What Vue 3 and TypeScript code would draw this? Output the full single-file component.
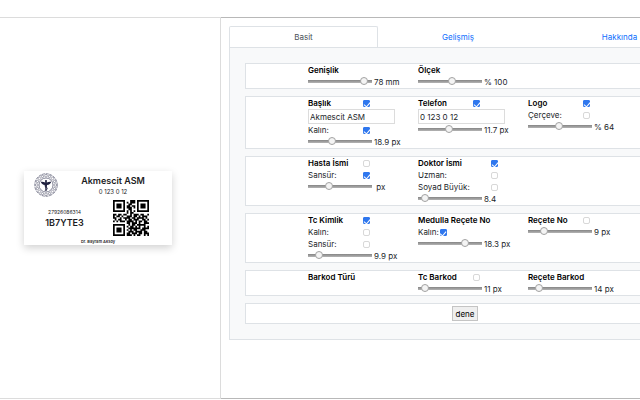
<script setup lang="ts">
import { reactive, ref } from 'vue'

interface Check {
  label: string
  checked: boolean
}

interface Field {
  id: string
  title: string
  enabled?: boolean
  text?: string
  options?: Check[]
  fit?: 'wide' | 'inline'
  slider?: number
  value?: string
}

const groups = reactive<Field[][]>([
  [
    { id: 'genislik', title: 'Genişlik', slider: 92, value: '78 mm' },
    { id: 'olcek', title: 'Ölçek', slider: 54, value: '% 100' },
  ],
  [
    { id: 'baslik', title: 'Başlık', enabled: true, text: 'Akmescit ASM', options: [{ label: 'Kalın:', checked: true }], slider: 36, value: '18.9 px' },
    { id: 'telefon', title: 'Telefon', enabled: true, text: '0 123 0 12', slider: 48, value: '11.7 px' },
    { id: 'logo', title: 'Logo', enabled: true, options: [{ label: 'Çerçeve:', checked: false }], slider: 49, value: '% 64' },
  ],
  [
    { id: 'hasta', title: 'Hasta İsmi', enabled: false, options: [{ label: 'Sansür:', checked: true }], slider: 31, value: '\u00a0px' },
    { id: 'doktor', title: 'Doktor İsmi', enabled: true, fit: 'wide', options: [{ label: 'Uzman:', checked: false }, { label: 'Soyad Büyük:', checked: false }], slider: 6, value: '8.4' },
  ],
  [
    { id: 'kimlik', title: 'Tc Kimlik', enabled: true, options: [{ label: 'Kalın:', checked: false }, { label: 'Sansür:', checked: false }], slider: 12, value: '9.9 px' },
    { id: 'medulla', title: 'Medulla Reçete No', fit: 'inline', options: [{ label: 'Kalın:', checked: true }], slider: 77, value: '18.3 px' },
    { id: 'recete', title: 'Reçete No', enabled: false, slider: 21, value: '9 px' },
  ],
  [
    { id: 'barkod', title: 'Barkod Türü' },
    { id: 'tcbarkod', title: 'Tc Barkod', enabled: false, slider: 6, value: '11 px' },
    { id: 'recetebarkod', title: 'Reçete Barkod', slider: 12, value: '14 px' },
  ],
])

const tabs = ['Basit', 'Gelişmiş', 'Hakkında']
const active = ref(0)

const qr = [
  '111111100011101111111',
  '100000101011101000001',
  '101110100110001011101',
  '101110101101101011101',
  '101110101110101011101',
  '100000100110001000001',
  '111111101010101111111',
  '000000001011000000000',
  '110110110010111011001',
  '101101001110110101110',
  '110010111101101111010',
  '010110010110111001101',
  '101011101111010110110',
  '000000001101110100111',
  '111111100101101111100',
  '100000101011010100101',
  '101110100111111101111',
  '101110101010110011100',
  '101110100111011110110',
  '100000101101110110111',
  '111111101110101100101',
]
const qrPath = qr
  .map((row, y) => [...row].map((c, x) => (c === '1' ? `M${x} ${y}h1v1h-1z` : '')).join(''))
  .join('')
const petals = Array.from({ length: 16 }, (_, i) => i * 22.5)
</script>

<template>
  <div class="page">
    <header class="topbar"></header>
    <main class="main">
      <section class="preview">
        <article class="card">
          <div class="card-head">
            <svg class="emblem" viewBox="0 0 48 48" aria-hidden="true">
              <g fill="none" stroke="#55566f">
                <circle cx="24" cy="24" r="22.5" stroke-width="1.4" stroke-dasharray="6 1.5" />
                <circle cx="24" cy="24" r="14" stroke-width="1.4" />
                <circle
                  v-for="a in petals" :key="a" cx="24" cy="5.5" r="2.6" stroke-width="1"
                  :transform="`rotate(${a} 24 24)`"
                />
              </g>
              <path
                fill="#20213f"
                d="M24 14a2 2 0 0 1 1.7 3l-.2 2c3-1.600 6-2 9-1.500-1 3.500-4 6-8.500 6.500L25 36h-2l-1-12c-4.500-.5-7.500-3-8.500-6.500 3-.5 6-.1 9 1.500l-.2-2A2 2 0 0 1 24 14z"
              />
              <path fill="none" stroke="#20213f" stroke-width="1.300" d="M21 25c0 3 6 3 6 6s-5 2-5 4" />
            </svg>
            <div class="card-titles">
              <h1>Akmescit ASM</h1>
              <p>0 123 0 12</p>
            </div>
          </div>
          <div class="card-body">
            <div class="codes">
              <span>27926086314</span>
              <strong>1B7YTE3</strong>
            </div>
            <svg class="qr" viewBox="0 0 21 21" aria-hidden="true"><path :d="qrPath" /></svg>
          </div>
          <footer>Dr. Bayram Aksoy</footer>
        </article>
      </section>

      <section class="settings">
        <div class="sheet">
          <nav class="tabs">
            <a
              v-for="(t, i) in tabs" :key="t" href="#" :class="{ active: i === active }"
              @click.prevent="active = i"
            >{{ t }}</a>
          </nav>
          <form class="panel" @submit.prevent>
            <div v-for="(group, g) in groups" :key="g" class="group">
              <div v-for="f in group" :key="f.id" class="field" :class="f.fit">
                <div class="row">
                  <label :id="f.id + '-title'" class="title" :for="f.enabled === undefined ? f.id + '-range' : f.id">{{ f.title }}</label>
                  <input v-if="f.enabled !== undefined" :id="f.id" v-model="f.enabled" type="checkbox">
                </div>
                <input v-if="f.text !== undefined" v-model="f.text" class="text" type="text" :aria-labelledby="f.id + '-title'">
                <div v-for="(o, n) in f.options" :key="o.label" class="row">
                  <label :for="f.id + n">{{ o.label }}</label>
                  <input :id="f.id + n" v-model="o.checked" type="checkbox">
                </div>
                <div v-if="f.slider !== undefined" class="row">
                  <input :id="f.id + '-range'" v-model.number="f.slider" type="range" min="0" max="100" :aria-labelledby="f.id + '-title'">
                  <output :for="f.id + '-range'">{{ f.value }}</output>
                </div>
              </div>
            </div>
            <div class="group actions">
              <button type="button">dene</button>
            </div>
          </form>
        </div>
      </section>
    </main>
  </div>
</template>

<style>
body {
  margin: 0;
  background: #fff;
}
</style>

<style scoped>
* {
  box-sizing: border-box;
}
.page {
  display: flex;
  flex-direction: column;
  min-height: 100vh;
  padding-bottom: 1px;
  overflow: hidden;
  font: 8px/12px Inter, "Liberation Sans", sans-serif;
  color: #212529;
}
.topbar {
  height: 17px;
}
.main {
  flex: 1;
  display: flex;
}
.preview {
  flex: 0 0 221px;
  display: flex;
  align-items: center;
  padding-left: 24px;
  border: 1px solid #dcdcdc;
  border-left: 0;
}
.card {
  width: 148px;
  padding-top: 2px;
  background: #fff;
  box-shadow: 0 3px 8px rgba(0, 0, 0, 0.18);
  color: #1c1c1e;
}
.card-head {
  display: flex;
  padding: 0 4px 0 10px;
}
.emblem {
  width: 24px;
  height: 24px;
}
.card-titles {
  flex: 1;
  text-align: center;
}
h1 {
  margin: 0;
  font-size: 9px;
  line-height: 15px;
  font-weight: 600;
}
p {
  margin: 0;
  font-size: 6px;
  line-height: 8px;
}
.card-body {
  display: grid;
  grid-template-columns: 81px 1fr;
  gap: 8px;
  padding: 3px 0;
}
.codes {
  display: flex;
  flex-direction: column;
  align-items: center;
  padding-top: 8px;
}
.codes span {
  font-size: 5px;
  line-height: 8px;
}
.codes strong {
  font-size: 9px;
  line-height: 13px;
  font-weight: 600;
}
.qr {
  width: 36px;
  height: 36px;
}
footer {
  font-size: 4px;
  line-height: 6px;
  font-weight: 600;
  text-align: center;
}
.settings {
  flex: 1;
  min-width: 0;
  padding: 8px;
  overflow: hidden;
  border: solid #b8b8b8;
  border-width: 1px 0;
}
.sheet {
  min-width: 472px;
}
.tabs {
  display: grid;
  grid-template-columns: 149fr 160fr 163fr;
}
.tabs a {
  padding: 4px 0;
  border: 1px solid transparent;
  border-bottom: 0;
  color: #0d6efd;
  text-align: center;
  text-decoration: none;
}
.tabs a.active {
  border-color: #dee2e6;
  border-radius: 2px 2px 0 0;
  color: #495057;
}
.panel {
  display: flex;
  flex-direction: column;
  gap: 7px;
  padding: 15px;
  border: 1px solid #dee2e6;
  background: #f8f9fa;
}
.group {
  display: grid;
  grid-template-columns: repeat(3, 110px);
  padding-left: 62px;
  border: 1px solid #dee2e6;
  background: #fff;
}
.row {
  display: flex;
  align-items: center;
  height: 12px;
  white-space: nowrap;
}
.row label {
  min-width: 55px;
}
.wide .row label {
  min-width: 73px;
}
.inline .row label {
  min-width: 0;
  margin-right: 1px;
}
.title {
  font-weight: 600;
  color: #000;
}
input[type="checkbox"] {
  appearance: none;
  width: 7px;
  height: 7px;
  margin: 1px 0 0;
  border: 1px solid #d8d8d8;
  border-radius: 2px;
  background: #fff;
}
input[type="checkbox"]:checked {
  display: grid;
  place-items: center;
  border-color: #2f77ee;
  border-radius: 1px;
  background: #2f77ee;
}
input[type="checkbox"]:checked::before {
  content: "";
  width: 3px;
  height: 5px;
  border: solid #fff;
  border-width: 0 1px 1px 0;
  transform: rotate(40deg);
}
.text {
  display: block;
  width: 87px;
  height: 15px;
  padding: 0 1px;
  border: 1px solid #dcdcdc;
  background: #fff;
  font: inherit;
  color: #212529;
}
input[type="range"] {
  appearance: none;
  width: 64px;
  height: 8px;
  margin: 0 2px 2px 0;
  background: linear-gradient(#858585, #b4b4b4) center / 100% 3px no-repeat;
}
input[type="range"]::-webkit-slider-thumb {
  appearance: none;
  width: 8px;
  height: 8px;
  border: 1px solid #a2a2a2;
  border-radius: 50%;
  background: #f4f4f4;
}
.actions {
  display: flex;
  justify-content: center;
  padding: 2px 0;
}
button {
  height: 15px;
  padding: 0 3px;
  border: 1px solid #c4c4c4;
  background: #efefef;
  font: inherit;
  color: #000;
}
</style>
